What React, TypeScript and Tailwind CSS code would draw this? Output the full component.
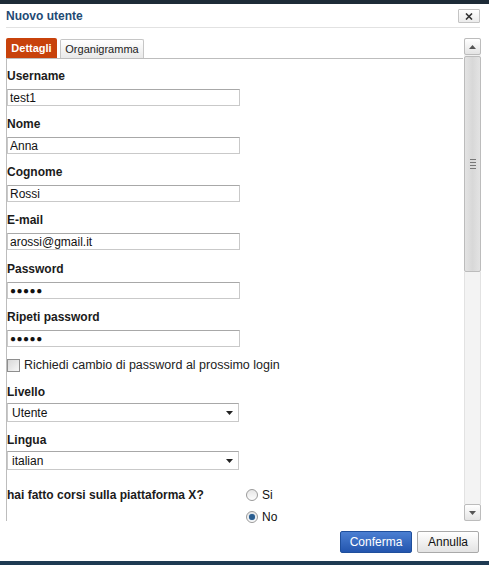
import React from "react";

const font = { fontFamily: '"Liberation Sans", Arial, sans-serif' };

const Field = ({ label, value, dots }: { label: string; value: string; dots?: boolean }) => (
  <div className="mb-[10px]">
    <div className="h-[16px] leading-[16px] text-[12px] font-bold text-[#1b1b1b]">{label}</div>
    <input
      readOnly
      type="text"
      value={value}
      className={
        "mt-[5px] block w-[233px] h-[17px] border border-[#c9c9c9] border-t-[#a8a8a8] bg-white px-[2px] leading-[15px] text-[#111] outline-none " +
        (dots ? "text-[10px] tracking-[0.5px]" : "text-[12px]")
      }
      style={font}
    />
  </div>
);

const SelectBox = ({ label, value }: { label: string; value: string }) => (
  <div className="mb-[10px]">
    <div className="h-[16px] leading-[16px] text-[12px] font-bold text-[#1b1b1b]">{label}</div>
    <div className="mt-[3px] flex items-center justify-between w-[232px] h-[19px] border border-[#c9c9c9] border-t-[#a8a8a8] bg-white pl-[4px] pr-[5px] text-[12px] text-[#111]">
      <span>{value}</span>
      <svg width="7" height="4" viewBox="0 0 7 4">
        <path d="M0 0h7L3.5 4z" fill="#222" />
      </svg>
    </div>
  </div>
);

const Radio = ({ label, checked }: { label: string; checked?: boolean }) => (
  <div className="flex items-center h-[16px] gap-[4px] text-[12px] text-[#111]">
    <span className="w-[12px] h-[12px] rounded-full border border-[#9a9a9a] bg-gradient-to-b from-[#e6e6e6] to-[#fdfdfd] flex items-center justify-center">
      {checked && <span className="w-[6px] h-[6px] rounded-full bg-[#2a5d8f] shadow-[0_0_1px_#6fa0d0]" />}
    </span>
    <span>{label}</span>
  </div>
);

export default function App() {
  return (
    <div className="w-[489px] h-[565px] bg-white flex flex-col overflow-hidden" style={font}>
      <div className="h-[4px] bg-[#1d2b37]" />

      {/* header */}
      <div className="mx-[6px] mr-[9px] h-[24px] flex items-center justify-between border-b border-[#e2e2e2]">
        <span className="text-[12px] font-bold text-[#1f4a74] pt-[1px]">Nuovo utente</span>
        <span className="w-[22px] h-[14px] border border-[#c4c4c4] rounded-[1px] bg-gradient-to-b from-white to-[#ececec] flex items-center justify-center mt-[1px]">
          <svg width="8" height="7" viewBox="0 0 8 7">
            <path d="M1 0.5l6 6M7 0.5l-6 6" stroke="#333" strokeWidth="1.6" />
          </svg>
        </span>
      </div>

      {/* body */}
      <div className="flex mt-[10px] ml-[6px] mr-[8px]">
        <div className="w-[458px] flex flex-col">
          <div className="flex items-end gap-[3px] h-[20px]">
            <div className="h-[20px] w-[51px] bg-[#c8420b] rounded-t-[2px] text-white text-[11px] font-bold flex items-center justify-center pt-[1px]">
              Dettagli
            </div>
            <div className="h-[19px] w-[84px] border border-b-0 border-[#c6c6c6] rounded-t-[2px] bg-gradient-to-b from-white to-[#e9e9e9] text-[11px] text-[#222] flex items-center justify-center">
              Organigramma
            </div>
          </div>
          <div className="h-[463px] border-t border-l border-[#bdbdbd]">
            <div className="pt-[9px]">
              <Field label="Username" value="test1" />
              <Field label="Nome" value="Anna" />
              <Field label="Cognome" value="Rossi" />
              <Field label="E-mail" value="arossi@gmail.it" />
              <div className="h-[1px]" />
              <Field label="Password" value="●●●●●" dots />
              <Field label="Ripeti password" value="●●●●●" dots />
              <div className="flex items-center gap-[4px] h-[16px] mt-[2px] mb-[11px] text-[12.5px] text-[#222]">
                <span className="w-[13px] h-[13px] border border-[#8e8e8e] bg-gradient-to-br from-[#d8d8d8] to-[#f7f7f7]" />
                <span>Richiedi cambio di password al prossimo login</span>
              </div>
              <SelectBox label="Livello" value="Utente" />
              <SelectBox label="Lingua" value="italian" />
              <div className="flex mt-[17px]">
                <div className="w-[239px] h-[16px] leading-[16px] text-[12px] font-bold text-[#1b1b1b]">
                  hai fatto corsi sulla piattaforma X?
                </div>
                <div className="flex flex-col gap-[6px]">
                  <Radio label="Si" />
                  <Radio label="No" checked />
                </div>
              </div>
            </div>
          </div>
        </div>

        {/* scrollbar */}
        <div className="ml-[1px] w-[17px] h-[483px] flex flex-col bg-[#f0f0f0]">
          <div className="h-[17px] border border-[#bcbcbc] rounded-[2px] bg-gradient-to-b from-white to-[#e4e4e4] flex items-center justify-center">
            <svg width="7" height="4" viewBox="0 0 7 4">
              <path d="M3.5 0L7 4H0z" fill="#555" />
            </svg>
          </div>
          <div className="mt-[1px] h-[216px] border border-[#bcbcbc] rounded-[2px] bg-gradient-to-r from-[#e3e3e3] via-[#d8d8d8] to-[#e3e3e3] flex items-center justify-center">
            <div className="flex flex-col gap-[2px]">
              <span className="w-[6px] h-[1px] bg-[#777]" />
              <span className="w-[6px] h-[1px] bg-[#777]" />
              <span className="w-[6px] h-[1px] bg-[#777]" />
              <span className="w-[6px] h-[1px] bg-[#777]" />
            </div>
          </div>
          <div className="flex-1 border-x border-[#e2e2e2] bg-[#f3f3f3]" />
          <div className="h-[17px] border border-[#bcbcbc] rounded-[2px] bg-gradient-to-b from-white to-[#e4e4e4] flex items-center justify-center">
            <svg width="7" height="4" viewBox="0 0 7 4">
              <path d="M0 0h7L3.5 4z" fill="#555" />
            </svg>
          </div>
        </div>
      </div>

      {/* footer */}
      <div className="flex justify-end gap-[5px] mt-[10px] mr-[10px]">
        <button className="w-[72px] h-[22px] border border-[#1f4f9c] rounded-[2px] bg-gradient-to-b from-[#4b7fd2] to-[#2355ae] text-white text-[12px]">
          Conferma
        </button>
        <button className="w-[62px] h-[22px] border border-[#a9a9a9] rounded-[2px] bg-gradient-to-b from-white to-[#e3e3e3] text-[#111] text-[12px]">
          Annulla
        </button>
      </div>

      <div className="flex-1" />
      <div className="h-[4px] bg-[#1e3a52]" />
    </div>
  );
}
